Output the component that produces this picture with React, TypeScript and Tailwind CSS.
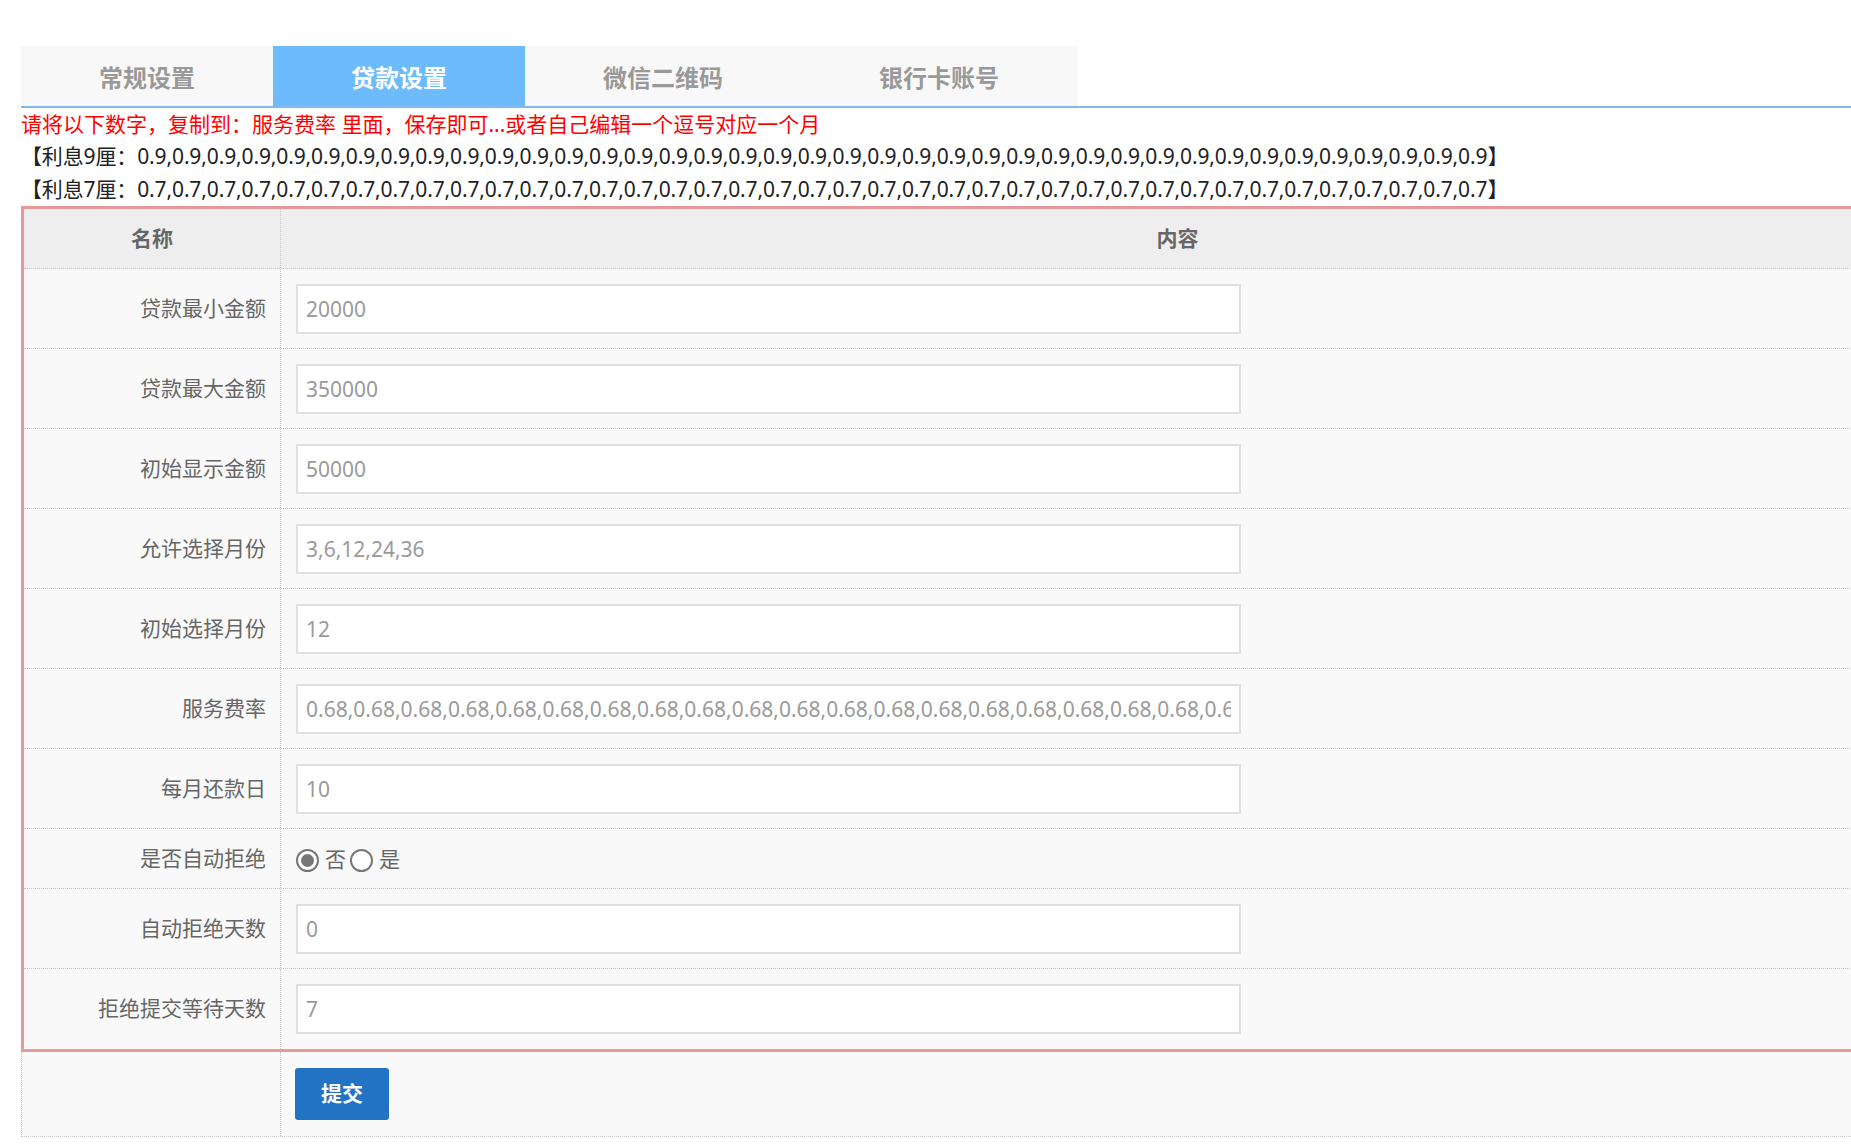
import type { ReactNode } from "react";

const tabs = ["常规设置", "贷款设置", "微信二维码", "银行卡账号"];

const rate9 = Array(39).fill("0.9").join(",");
const rate7 = Array(39).fill("0.7").join(",");
const feeRate = Array(39).fill("0.68").join(",");

const fields: { label: string; value: string }[] = [
  { label: "贷款最小金额", value: "20000" },
  { label: "贷款最大金额", value: "350000" },
  { label: "初始显示金额", value: "50000" },
  { label: "允许选择月份", value: "3,6,12,24,36" },
  { label: "初始选择月份", value: "12" },
  { label: "服务费率", value: feeRate },
  { label: "每月还款日", value: "10" },
];

const tailFields: { label: string; value: string }[] = [
  { label: "自动拒绝天数", value: "0" },
  { label: "拒绝提交等待天数", value: "7" },
];

function Row({ label, children, tall = true }: { label: string; children: ReactNode; tall?: boolean }) {
  return (
    <div
      className={`grid grid-cols-[257px_1fr] border-b border-dotted border-[#c9c9c9] bg-[#f9f9f9] last:border-b-0 ${
        tall ? "h-[80px]" : "h-[60px]"
      }`}
    >
      <div className="flex items-center justify-end border-r border-dotted border-[#c9c9c9] pr-[14px] text-[#666666]">
        {label}
      </div>
      <div className="flex items-center pl-[15px]">{children}</div>
    </div>
  );
}

function TextInput({ value }: { value: string }) {
  return (
    <input
      readOnly
      value={value}
      className="h-[50px] w-[945px] border-2 border-[#e0e0e0] bg-white px-[8px] text-[21px] text-[#9a9a9a] outline-none"
    />
  );
}

function Radio({ checked, label }: { checked?: boolean; label: string }) {
  return (
    <label className="flex items-center pt-[3px]">
      <span className="flex h-[23px] w-[23px] items-center justify-center rounded-full border-2 border-[#777777] bg-white">
        {checked && <span className="h-[13px] w-[13px] rounded-full bg-[#777777]" />}
      </span>
      <span className="ml-[6px] mr-[4px] text-[#666666]">{label}</span>
    </label>
  );
}

export default function App() {
  return (
    <div className="min-h-screen w-full overflow-hidden bg-white pl-[21px] pt-[46px] font-['Noto_Sans','Noto_Sans_CJK_SC',sans-serif] text-[21px]">
      <div className="flex w-[1057px] bg-[#f8f8f8]">
        {tabs.map((t, i) => (
          <div
            key={t}
            className={`h-[60px] px-[78px] pt-[3px] text-[24px] font-bold leading-[57px] ${
              i === 1 ? "bg-[#6dbafc] text-white" : "text-[#999999]"
            }`}
          >
            {t}
          </div>
        ))}
      </div>
      <div className="h-[2px] bg-[#80b9ee]" />

      <div className="text-[#ff0000] leading-[32px]">
        请将以下数字，复制到：服务费率 里面，保存即可...或者自己编辑一个逗号对应一个月
      </div>
      <div className="whitespace-nowrap leading-[33px] tracking-[-0.13px] text-[#222222]">【利息9厘：{rate9}】</div>
      <div className="whitespace-nowrap leading-[33px] tracking-[-0.13px] text-[#222222]">【利息7厘：{rate7}】</div>

      <div className="w-[2056px] border-[3px] border-[#e6999d]">
        <div className="grid h-[60px] grid-cols-[257px_1fr] border-b border-dotted border-[#c9c9c9] bg-[#eeeeee] font-bold text-[#666666]">
          <div className="flex items-center justify-center border-r border-dotted border-[#c9c9c9]">名称</div>
          <div className="flex items-center justify-center">内容</div>
        </div>
        {fields.map((f) => (
          <Row key={f.label} label={f.label}>
            <TextInput value={f.value} />
          </Row>
        ))}
        <Row label="是否自动拒绝" tall={false}>
          <Radio checked label="否" />
          <Radio label="是" />
        </Row>
        {tailFields.map((f) => (
          <Row key={f.label} label={f.label}>
            <TextInput value={f.value} />
          </Row>
        ))}
      </div>

      <div className="grid h-[85px] w-[2056px] grid-cols-[259px_1fr] border-b border-l border-dotted border-[#c9c9c9] bg-[#f9f9f9]">
        <div className="border-r border-dotted border-[#c9c9c9]" />
        <div className="flex items-center pl-[14px]">
          <button className="h-[52px] w-[94px] rounded-[3px] bg-[#2373c4] text-[21px] font-bold text-white">
            提交
          </button>
        </div>
      </div>
    </div>
  );
}
